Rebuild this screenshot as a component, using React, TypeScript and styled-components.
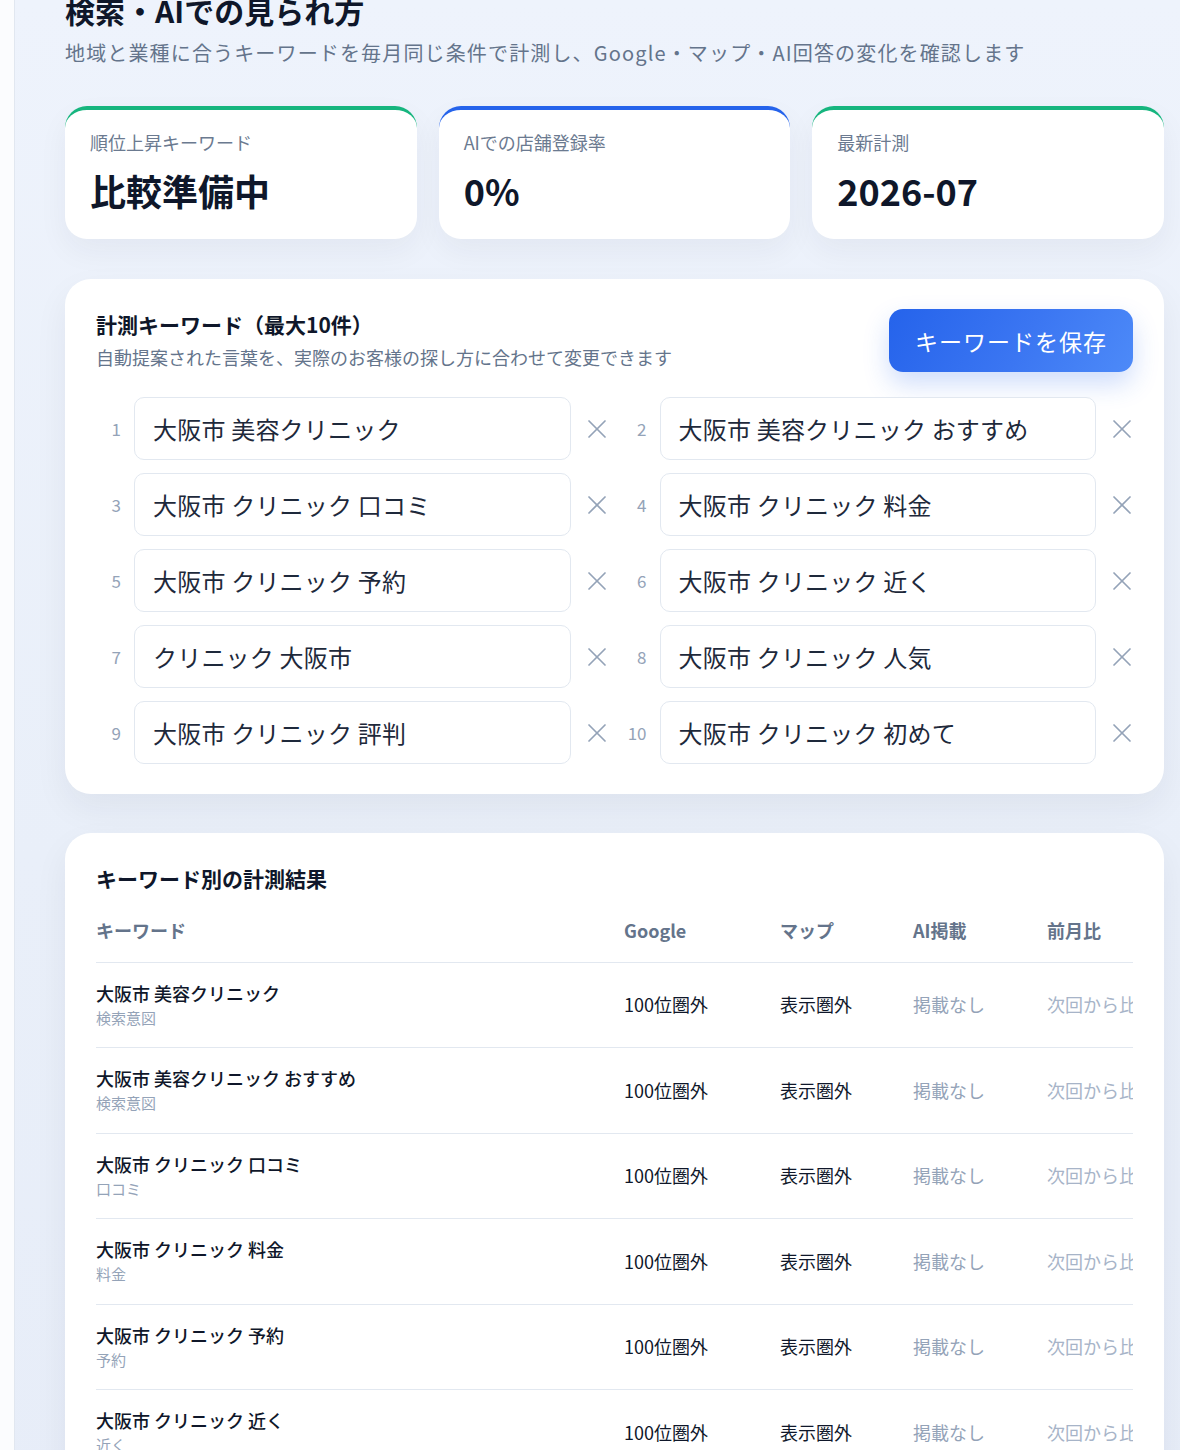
import * as React from "react";
import styled, { createGlobalStyle } from "styled-components";
import { X } from "lucide-react";

const GlobalStyle = createGlobalStyle`
  * {
    box-sizing: border-box;
  }
  body {
    margin: 0;
    font-family: "Noto Sans CJK JP", "Noto Sans", sans-serif;
    color: #0f172a;
    background: #eaf0fa;
  }
`;

const Page = styled.div`
  display: flex;
  min-height: 100vh;
`;

const SideRail = styled.aside`
  flex: 0 0 15px;
  background: #fbfcfe;
  border-right: 1px solid #e1e7f0;
`;

const Main = styled.main`
  flex: 1;
  min-width: 0;
  padding: 0 16px 48px 50px;
  background: linear-gradient(180deg, #eef3fc 0%, #e9eff9 45%, #e6ecf8 100%);
`;

const Title = styled.h1`
  margin: -9px 0 0;
  font-size: 30px;
  line-height: 1.3;
  font-weight: 700;
  color: #0f172a;
`;

const Lead = styled.p`
  margin: 8px 0 0;
  font-size: 20px;
  letter-spacing: 1.15px;
  line-height: 1.5;
  color: #64748b;
`;

const StatGrid = styled.div`
  display: grid;
  grid-template-columns: repeat(3, 1fr);
  gap: 22px;
  margin-top: 38px;
`;

const StatCard = styled.div<{ $accent: string }>`
  background: #fff;
  border-radius: 22px;
  border-top: 4px solid ${(p) => p.$accent};
  padding: 19px 25px 27px;
  box-shadow: 0 12px 30px rgba(30, 41, 59, 0.05);
`;

const StatLabel = styled.div`
  font-size: 18px;
  line-height: 27px;
  color: #6b7a90;
`;

const StatValue = styled.div`
  margin-top: 13px;
  font-size: 36px;
  line-height: 1.2;
  font-weight: 700;
  color: #0f172a;
`;

const Panel = styled.section<{ $gap: number }>`
  margin-top: ${(p) => p.$gap}px;
  background: #fff;
  border-radius: 26px;
  padding: 30px 31px;
  box-shadow: 0 14px 34px rgba(30, 41, 59, 0.06);
`;

const PanelHead = styled.div`
  display: flex;
  justify-content: space-between;
  align-items: center;
`;

const PanelTitle = styled.h2`
  margin: 0;
  font-size: 21px;
  line-height: 1.4;
  font-weight: 700;
  color: #0f172a;
`;

const PanelNote = styled.p`
  margin: 4px 0 0;
  font-size: 18px;
  line-height: 1.5;
  color: #64748b;
`;

const SaveButton = styled.button`
  height: 63px;
  padding: 0 26px;
  border: none;
  border-radius: 14px;
  background: linear-gradient(120deg, #2563eb 0%, #3b76f2 55%, #4d8af8 100%);
  color: #fff;
  font-family: inherit;
  font-size: 23px;
  letter-spacing: 1px;
  box-shadow: 0 12px 26px rgba(37, 99, 235, 0.22);
  cursor: pointer;
`;

const KeywordGrid = styled.div`
  display: grid;
  grid-template-columns: 1fr 1fr;
  column-gap: 9px;
  row-gap: 13px;
  margin: 25px -5px 0 0;
`;

const KeywordItem = styled.div`
  display: flex;
  align-items: center;
`;

const KeywordNo = styled.span`
  flex: 0 0 25px;
  margin-right: 13px;
  text-align: right;
  font-size: 17px;
  color: #94a3b8;
`;

const KeywordInput = styled.input`
  flex: 1;
  min-width: 0;
  height: 63px;
  padding: 0 18px;
  border: 1.5px solid #e2e8f0;
  border-radius: 10px;
  background: #fff;
  font-family: inherit;
  font-size: 24px;
  letter-spacing: 0.2px;
  color: #1e293b;
  outline: none;
`;

const RemoveButton = styled.button`
  flex: 0 0 30px;
  height: 30px;
  margin-left: 10px;
  padding: 0;
  border: none;
  background: none;
  color: #94a3b8;
  display: flex;
  align-items: center;
  justify-content: center;
  cursor: pointer;
`;

const ResultsTitle = styled(PanelTitle)`
  margin: 1px 0 6px;
`;

const TableClip = styled.div`
  overflow: hidden;
`;

const Row = styled.div<{ $head?: boolean }>`
  display: grid;
  grid-template-columns: 528px 156px 133px 134px 140px;
  border-top: ${(p) => (p.$head ? "none" : "1px solid #e2e8f0")};
  padding: ${(p) => (p.$head ? "17px 0 18px" : "17px 0 19px")};
`;

const HeadCell = styled.div`
  font-size: 18px;
  line-height: 27px;
  font-weight: 700;
  color: #64748b;
  white-space: nowrap;
`;

const KeywordCell = styled.div`
  display: flex;
  flex-direction: column;
`;

const KeywordText = styled.span`
  font-size: 18px;
  line-height: 27px;
  font-weight: 500;
  color: #0f172a;
`;

const IntentText = styled.span`
  font-size: 15px;
  line-height: 21.5px;
  color: #94a3b8;
`;

const ValueCell = styled.div<{ $muted?: boolean; $faint?: boolean }>`
  align-self: center;
  margin-top: 2px;
  font-size: 18px;
  line-height: 27px;
  white-space: nowrap;
  color: ${(p) => (p.$faint ? "#a7b4c8" : p.$muted ? "#94a3b8" : "#0f172a")};
`;

const stats = [
  { label: "順位上昇キーワード", value: "比較準備中", accent: "#16b57e" },
  { label: "AIでの店舗登録率", value: "0%", accent: "#2563eb" },
  { label: "最新計測", value: "2026-07", accent: "#16b57e" },
];

const keywords = [
  { text: "大阪市 美容クリニック", intent: "検索意図" },
  { text: "大阪市 美容クリニック おすすめ", intent: "検索意図" },
  { text: "大阪市 クリニック 口コミ", intent: "口コミ" },
  { text: "大阪市 クリニック 料金", intent: "料金" },
  { text: "大阪市 クリニック 予約", intent: "予約" },
  { text: "大阪市 クリニック 近く", intent: "近く" },
  { text: "クリニック 大阪市", intent: "検索意図" },
  { text: "大阪市 クリニック 人気", intent: "人気" },
  { text: "大阪市 クリニック 評判", intent: "評判" },
  { text: "大阪市 クリニック 初めて", intent: "初めて" },
];

const App = () => {
  return (
    <>
      <GlobalStyle />
      <Page>
        <SideRail />
        <Main>
          <Title>検索・AIでの見られ方</Title>
          <Lead>
            地域と業種に合うキーワードを毎月同じ条件で計測し、Google・マップ・AI回答の変化を確認します
          </Lead>

          <StatGrid>
            {stats.map((s) => (
              <StatCard key={s.label} $accent={s.accent}>
                <StatLabel>{s.label}</StatLabel>
                <StatValue>{s.value}</StatValue>
              </StatCard>
            ))}
          </StatGrid>

          <Panel $gap={40}>
            <PanelHead>
              <div>
                <PanelTitle>計測キーワード（最大10件）</PanelTitle>
                <PanelNote>自動提案された言葉を、実際のお客様の探し方に合わせて変更できます</PanelNote>
              </div>
              <SaveButton>キーワードを保存</SaveButton>
            </PanelHead>
            <KeywordGrid>
              {keywords.map((k, i) => (
                <KeywordItem key={i}>
                  <KeywordNo>{i + 1}</KeywordNo>
                  <KeywordInput defaultValue={k.text} />
                  <RemoveButton aria-label="削除">
                    <X size={32} strokeWidth={1.3} />
                  </RemoveButton>
                </KeywordItem>
              ))}
            </KeywordGrid>
          </Panel>

          <Panel $gap={39}>
            <ResultsTitle>キーワード別の計測結果</ResultsTitle>
            <TableClip>
              <Row $head>
                <HeadCell>キーワード</HeadCell>
                <HeadCell>Google</HeadCell>
                <HeadCell>マップ</HeadCell>
                <HeadCell>AI掲載</HeadCell>
                <HeadCell>前月比</HeadCell>
              </Row>
              {keywords.map((k, i) => (
                <Row key={i}>
                  <KeywordCell>
                    <KeywordText>{k.text}</KeywordText>
                    <IntentText>{k.intent}</IntentText>
                  </KeywordCell>
                  <ValueCell>100位圏外</ValueCell>
                  <ValueCell>表示圏外</ValueCell>
                  <ValueCell $muted>掲載なし</ValueCell>
                  <ValueCell $faint>次回から比較</ValueCell>
                </Row>
              ))}
            </TableClip>
          </Panel>
        </Main>
      </Page>
    </>
  );
};

export default App;
